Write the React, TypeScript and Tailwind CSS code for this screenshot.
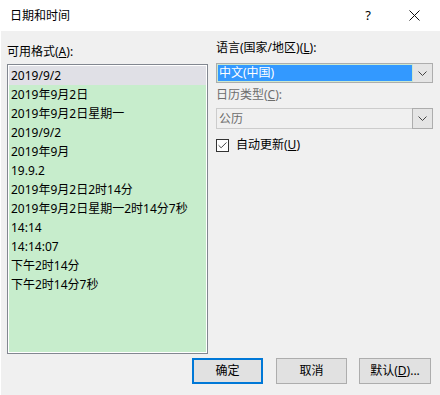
import { Check } from "lucide-react";

const formats = [
  "2019/9/2",
  "2019年9月2日",
  "2019年9月2日星期一",
  "2019/9/2",
  "2019年9月",
  "19.9.2",
  "2019年9月2日2时14分",
  "2019年9月2日星期一2时14分7秒",
  "14:14",
  "14:14:07",
  "下午2时14分",
  "下午2时14分7秒",
];

const font = "font-['Noto_Sans','Noto_Sans_CJK_SC',sans-serif]";

function Chevron({ color = "#444" }: { color?: string }) {
  return (
    <svg width="9" height="5" viewBox="0 0 9 5">
      <path d="M0.5 0.5 L4.5 4.5 L8.5 0.5" fill="none" stroke={color} strokeWidth="1" />
    </svg>
  );
}

export default function App() {
  return (
    <div className={`w-[440px] h-[395px] bg-white flex flex-col text-[12px] text-black ${font}`}>
      {/* title bar */}
      <div className="h-[31px] flex items-center shrink-0">
        <span className="ml-[10px] leading-4">日期和时间</span>
        <span className="ml-auto mr-[38px] text-[13px]">?</span>
        <svg width="11" height="11" viewBox="0 0 11 11" className="mr-[20px]">
          <path d="M0.5 0.5 L10.5 10.5 M10.5 0.5 L0.5 10.5" stroke="#111" strokeWidth="1" />
        </svg>
      </div>

      <div className="flex-1 bg-[#f0f0f0] border-l border-white flex flex-col pl-[6px] pt-[9px]">
        <div className="flex">
          {/* left column */}
          <div className="w-[201px] flex flex-col">
            <div className="leading-4 mt-[4px]">
              可用格式(<span className="underline">A</span>):
            </div>
            <div className="mt-[4px] h-[290px] border border-[#828790] p-px bg-white">
              <div className="h-full bg-[#c7edcc] flex flex-col">
                {formats.map((f, i) => (
                  <div
                    key={i}
                    className={`h-[19px] leading-[19px] pl-[2px] ${i === 0 ? "bg-[#e0e0e6]" : ""}`}
                  >
                    {f}
                  </div>
                ))}
              </div>
            </div>
          </div>

          {/* right column */}
          <div className="ml-[8px] w-[217px] flex flex-col">
            <div className="leading-4">
              语言(国家/地区)(<span className="underline">L</span>):
            </div>
            <div className="mt-[7px] h-[20px] border border-[#adadad] flex">
              <div className="flex-1 p-px bg-[#cce8cf]">
                <div className="h-full bg-[#3399ff] text-white leading-4 pl-[1px]">中文(中国)</div>
              </div>
              <div className="w-[19px] bg-[#e5e5e5] flex items-center justify-center">
                <Chevron />
              </div>
            </div>

            <div className="leading-4 mt-[4px] text-[#6d6d6d]">
              日历类型(<span className="underline">C</span>):
            </div>
            <div className="mt-[5px] h-[21px] flex">
              <div className="flex-1 border border-[#cccccc] border-r-0 bg-[#f0f0f0] text-[#6d6d6d] leading-[19px] pl-[2px]">
                公历
              </div>
              <div className="w-[21px] bg-[#e5e5e5] border border-[#adadad] flex items-center justify-center">
                <Chevron />
              </div>
            </div>

            <div className="mt-[8px] flex items-center h-4">
              <div className="w-[13px] h-[13px] border border-[#333] bg-white flex items-center justify-center">
                <Check size={11} strokeWidth={2} color="#333" />
              </div>
              <span className="ml-[7px] leading-4">
                自动更新(<span className="underline">U</span>)
              </span>
            </div>
          </div>
        </div>

        {/* buttons */}
        <div className="mt-[4px] flex justify-end pr-[9px] gap-[13px]">
          <button className="w-[71px] h-[26px] bg-[#e1e1e1] border-2 border-[#0078d7] leading-4">确定</button>
          <button className="w-[71px] h-[26px] bg-[#e1e1e1] border border-[#adadad] leading-4">取消</button>
          <button className="w-[72px] h-[26px] bg-[#e1e1e1] border border-[#adadad] leading-4 -ml-px">
            默认(<span className="underline">D</span>)...
          </button>
        </div>
      </div>
    </div>
  );
}
